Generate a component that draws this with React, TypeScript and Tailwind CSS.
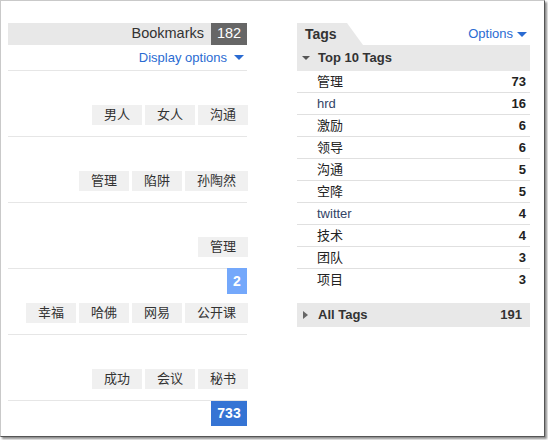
import React from "react";

// Bookmark groups: only the tag chips are shown per bookmark
const groups: { tags: string[]; badge?: { label: string; color: string } }[] = [
  { tags: ["男人", "女人", "沟通"] },
  { tags: ["管理", "陷阱", "孙陶然"] },
  { tags: ["管理"] },
  { tags: ["幸福", "哈佛", "网易", "公开课"], badge: { label: "2", color: "bg-[#74a8fb]" } },
  { tags: ["成功", "会议", "秘书"] },
];

const topTags: { name: string; count: number }[] = [
  { name: "管理", count: 73 },
  { name: "hrd", count: 16 },
  { name: "激励", count: 6 },
  { name: "领导", count: 6 },
  { name: "沟通", count: 5 },
  { name: "空降", count: 5 },
  { name: "twitter", count: 4 },
  { name: "技术", count: 4 },
  { name: "团队", count: 3 },
  { name: "项目", count: 3 },
];

const font = "font-['Liberation_Sans','Noto_Sans_CJK_SC',sans-serif]";

const DownCaret = ({ color }: { color: string }) => (
  <span
    className={`inline-block w-0 h-0 border-l-[5px] border-r-[5px] border-t-[5px] border-l-transparent border-r-transparent ${color}`}
  />
);

const Chip = ({ label }: { label: string }) => (
  <span
    className={`h-[20px] flex items-center justify-center bg-[#f0f0f0] text-[13px] text-[#333] ${
      label.length > 2 ? "w-[63px]" : "w-[50px]"
    }`}
  >
    {label}
  </span>
);

const BookmarkList = () => (
  <div className="w-[239px] flex flex-col">
    <div className="h-[22px] bg-[#e8e8e8] flex justify-end items-stretch">
      <span className="flex items-center text-[14.5px] text-[#333] pr-[7px]">Bookmarks</span>
      <span className="w-[36px] bg-[#666] text-white text-[14.5px] flex items-center justify-center">
        182
      </span>
    </div>
    <div className="h-[26px] border-b border-[#e6e6e6] flex items-center justify-end gap-[7px] pr-[3px]">
      <span className="text-[13px] text-[#2a6bd2]">Display options</span>
      <DownCaret color="border-t-[#2a6bd2]" />
    </div>
    {groups.map((g, i) => (
      <div
        key={i}
        className="relative h-[66px] border-b border-[#e6e6e6] flex flex-col justify-end pb-[11px]"
      >
        {g.badge && (
          <span
            className={`absolute right-0 top-[-1px] w-[20px] h-[26px] ${g.badge.color} text-white text-[14px] font-bold flex items-center justify-center`}
          >
            {g.badge.label}
          </span>
        )}
        <div className="flex justify-end gap-[3px] -mr-px">
          {g.tags.map((t) => (
            <Chip key={t} label={t} />
          ))}
        </div>
      </div>
    ))}
    <div className="flex justify-end">
      <span className="-mt-px w-[36px] h-[26px] bg-[#3574d4] text-white text-[14px] font-bold flex items-center justify-center">
        733
      </span>
    </div>
  </div>
);

const TagPanel = () => (
  <div className="w-[233px] flex flex-col">
    <div className="h-[22px] flex items-stretch justify-between">
      <div className="w-[66px] bg-[#e8e8e8] [clip-path:polygon(0_0,50px_0,66px_100%,0_100%)] flex items-center pl-[8px]">
        <span className="text-[14px] font-bold text-[#333]">Tags</span>
      </div>
      <div className="flex items-center gap-[4px] pr-[3px]">
        <span className="text-[13px] text-[#2a6bd2]">Options</span>
        <DownCaret color="border-t-[#2a6bd2]" />
      </div>
    </div>
    <div className="h-[26px] bg-[#e8e8e8] flex items-center pl-[5px] gap-[8px]">
      <span className="inline-block w-0 h-0 border-l-[4px] border-r-[4px] border-t-[4px] border-l-transparent border-r-transparent border-t-[#555]" />
      <span className="text-[13px] font-bold text-[#333]">Top 10 Tags</span>
    </div>
    {topTags.map((t, i) => (
      <div
        key={t.name}
        className={`h-[22px] flex items-center justify-between pl-[20px] pr-[4px] text-[13px] ${
          i < topTags.length - 1 ? "border-b border-[#e0e0e0]" : ""
        }`}
      >
        <span className={/[a-z]/.test(t.name) ? "text-[#334466]" : "text-[#222]"}>{t.name}</span>
        <span className="font-bold text-[#222]">{t.count}</span>
      </div>
    ))}
    <div className="mt-[12px] h-[24px] bg-[#e8e8e8] flex items-center pl-[6px] pr-[8px]">
      <span className="inline-block w-0 h-0 border-t-[4px] border-b-[4px] border-l-[5px] border-t-transparent border-b-transparent border-l-[#666]" />
      <span className="ml-[10px] text-[13px] font-bold text-[#333]">All Tags</span>
      <span className="ml-auto text-[13px] font-bold text-[#333]">191</span>
    </div>
  </div>
);

export default function App() {
  return (
    <div className={`w-[548px] h-[440px] bg-white ${font}`}>
      <div className="w-[545px] h-[437px] border-l border-t border-[#c9c9c9] border-r border-r-[#555] border-b border-b-[#555] shadow-[2px_2px_2px_rgba(0,0,0,0.45)] overflow-hidden">
        <div className="flex gap-[50px] pl-[7px] pt-[22px]">
          <BookmarkList />
          <TagPanel />
        </div>
      </div>
    </div>
  );
}
